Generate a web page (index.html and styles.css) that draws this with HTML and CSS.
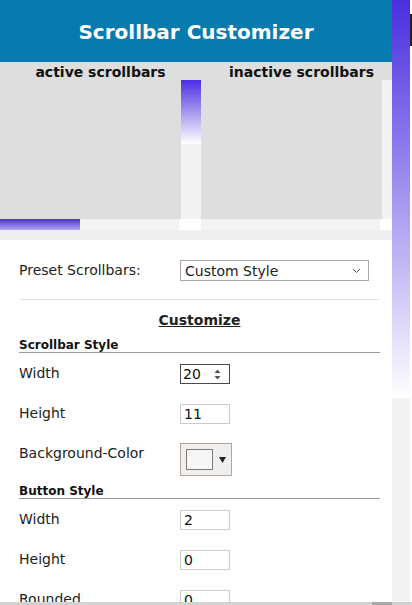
FILE: index.html
```html
<!DOCTYPE html>
<html lang="en">
<head>
<meta charset="utf-8">
<title>Scrollbar Customizer</title>
<link rel="stylesheet" href="styles.css">
</head>
<body>
<div class="frame">
  <div class="page">
    <header class="header"><h1 class="title">Scrollbar Customizer</h1></header>
    <section class="preview">
      <div class="pane">
        <div class="pane-label">active scrollbars</div>
        <div class="box">
          <div class="box-main">
            <div class="box-content"></div>
            <div class="vbar"><div class="vthumb"></div></div>
          </div>
          <div class="hbar-row">
            <div class="htrack"><div class="hthumb"></div></div>
            <div class="corner"></div>
          </div>
        </div>
      </div>
      <div class="pane">
        <div class="pane-label">inactive scrollbars</div>
        <div class="box">
          <div class="box-main">
            <div class="box-content"></div>
            <div class="vbar"></div>
          </div>
          <div class="hbar-row">
            <div class="htrack"></div>
            <div class="corner"></div>
          </div>
        </div>
      </div>
    </section>
    <div class="preview-foot"></div>
    <form class="form">
      <div class="preset-row">
        <label class="label">Preset Scrollbars:</label>
        <span class="select-wrap">
          <select class="select"><option>Custom Style</option></select>
          <svg class="chevron" width="9" height="6" viewBox="0 0 9 6"><path d="M1 1 L4.5 4.5 L8 1" fill="none" stroke="#555" stroke-width="1"/></svg>
        </span>
      </div>
      <hr class="divider">
      <div class="customize-title">Customize</div>
      <div class="section-title">Scrollbar Style</div>
      <div class="field">
        <label class="label">Width</label>
        <span class="spin-wrap">
          <input class="input input-focus" type="text" value="20">
          <svg class="spinner" width="7" height="11" viewBox="0 0 7 11"><path d="M0.5 4 L3.5 0.5 L6.5 4 Z M0.5 7 L3.5 10.5 L6.5 7 Z" fill="#555"/></svg>
        </span>
      </div>
      <div class="field">
        <label class="label">Height</label>
        <input class="input" type="text" value="11">
      </div>
      <div class="field">
        <label class="label">Background-Color</label>
        <span class="color-btn">
          <span class="swatch"></span>
          <svg class="tri" width="7" height="6" viewBox="0 0 7 6"><path d="M0 0 H7 L3.5 6 Z" fill="#222"/></svg>
        </span>
      </div>
      <div class="section-title section-title-2">Button Style</div>
      <div class="field">
        <label class="label">Width</label>
        <input class="input" type="text" value="2">
      </div>
      <div class="field">
        <label class="label">Height</label>
        <input class="input" type="text" value="0">
      </div>
      <div class="field">
        <label class="label">Rounded</label>
        <input class="input" type="text" value="0">
      </div>
    </form>
  </div>
  <div class="page-scroll"><div class="page-thumb"></div></div>
  <div class="edge"><div class="edge-mark"></div></div>
</div>
<div class="bottom-bar"><div class="bottom-thumb"></div></div>
</body>
</html>
```
FILE: styles.css
```css
html, body {
  margin: 0;
  padding: 0;
  height: 605px;
  overflow: hidden;
  background: #fff;
}
body {
  display: flex;
  flex-direction: column;
  font-family: "DejaVu Sans", Verdana, sans-serif;
  color: #222;
}
.frame {
  flex: 1;
  min-height: 0;
  display: flex;
}
.page {
  width: 392px;
  flex-shrink: 0;
  overflow: hidden;
}
.header {
  height: 62px;
  background: #077aae;
  display: flex;
  align-items: center;
  justify-content: center;
}
.title {
  margin: 0;
  color: #fff;
  font-size: 20px;
  font-weight: bold;
  padding-top: 2px;
}
.preview {
  display: flex;
  background: #dedede;
  overflow: hidden;
}
.pane {
  width: 201px;
  flex-shrink: 0;
}
.pane-label {
  height: 18px;
  line-height: 20px;
  text-align: center;
  font-size: 14px;
  font-weight: bold;
  color: #111;
}
.box-main {
  display: flex;
  height: 139px;
}
.box-content {
  flex: 1;
}
.vbar {
  width: 20px;
  background: #f3f3f3;
}
.vthumb {
  height: 64px;
  background: linear-gradient(to bottom, #4a2ee0, #ffffff);
}
.hbar-row {
  display: flex;
  height: 11px;
}
.htrack {
  flex: 1;
  background: #f3f3f3;
}
.hthumb {
  width: 80px;
  height: 100%;
  background: linear-gradient(to bottom, #4a2ee0, #b3aaf2);
}
.corner {
  width: 22px;
  background: #fff;
}
.preview-foot {
  height: 10px;
  background: #efefef;
}
.form {
  padding: 20px 12px 0 19px;
  font-size: 14px;
}
.label {
  width: 161px;
  flex-shrink: 0;
  line-height: 17px;
  color: #222;
}
.preset-row {
  display: flex;
  align-items: center;
  height: 21px;
}
.select-wrap {
  position: relative;
  display: block;
  width: 189px;
  height: 21px;
}
.select {
  appearance: none;
  -webkit-appearance: none;
  width: 100%;
  height: 21px;
  box-sizing: border-box;
  border: 1px solid #a9a9a9;
  border-radius: 0;
  background: #fff;
  font-family: "DejaVu Sans", Verdana, sans-serif;
  font-size: 14px;
  color: #222;
  padding: 0 4px;
  margin: 0;
}
.chevron {
  position: absolute;
  right: 8px;
  top: 8px;
}
.divider {
  border: 0;
  border-top: 1px solid #e4e4e4;
  margin: 18px 0 0;
}
.customize-title {
  margin-top: 12px;
  line-height: 17px;
  text-align: center;
  font-size: 14px;
  font-weight: bold;
  text-decoration: underline;
  color: #222;
}
.section-title {
  margin-top: 10px;
  margin-bottom: 11px;
  line-height: 13px;
  font-size: 12px;
  font-weight: bold;
  color: #111;
  border-bottom: 1px solid #9a9a9a;
}
.section-title-2 {
  margin-top: 1px;
}
.field {
  display: flex;
  align-items: flex-start;
  height: 40px;
}
.field .label {
  padding-top: 1px;
}
.input {
  width: 50px;
  height: 20px;
  box-sizing: border-box;
  border: 1px solid #cbcbcb;
  border-radius: 0;
  padding: 0 3px;
  margin: 0;
  font-family: "DejaVu Sans", Verdana, sans-serif;
  font-size: 14px;
  color: #111;
  background: #fff;
}
.spin-wrap {
  position: relative;
  display: block;
  width: 50px;
  height: 20px;
}
.input-focus {
  border: 1px solid #4a4a4a;
  padding-left: 2px;
}
.spinner {
  position: absolute;
  right: 9px;
  top: 5px;
}
.color-btn {
  width: 52px;
  height: 33px;
  box-sizing: border-box;
  border: 1px solid #b3a697;
  background: #efefef;
  display: flex;
  align-items: center;
  padding-left: 5px;
  gap: 6px;
  margin-top: -1px;
}
.swatch {
  width: 27px;
  height: 21px;
  box-sizing: border-box;
  border: 1px solid #7a7a7a;
  background: #f6f6f6;
}
.page-scroll {
  width: 18px;
  flex-shrink: 0;
  background: #f3f3f3;
}
.page-thumb {
  height: 398px;
  background: linear-gradient(to bottom, #4a2ee0, #ffffff);
}
.edge {
  width: 2px;
  flex-shrink: 0;
  background: #fff;
  padding-top: 14px;
}
.edge-mark {
  height: 32px;
  background: #222;
}
.bottom-bar {
  height: 3px;
  background: #d2d2d2;
  display: flex;
  justify-content: flex-end;
  padding-right: 20px;
}
.bottom-thumb {
  width: 20px;
  background: #a8a8a8;
}
```
